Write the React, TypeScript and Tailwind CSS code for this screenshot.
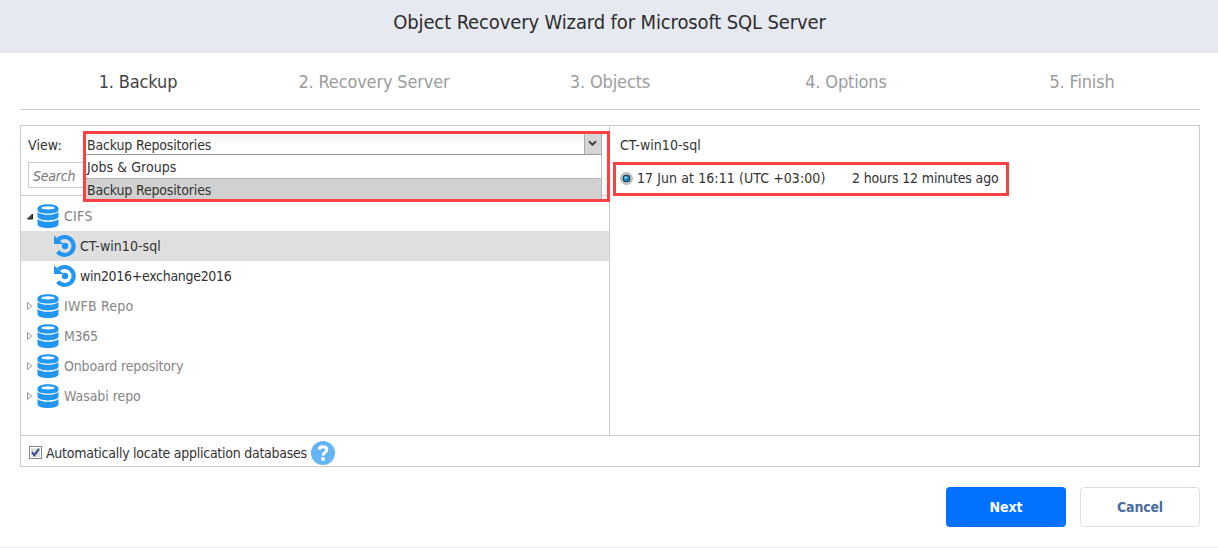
import React from "react";

const steps = ["1. Backup", "2. Recovery Server", "3. Objects", "4. Options", "5. Finish"];

function Database() {
  return (
    <svg className="h-6 w-[22px] shrink-0" viewBox="0 0 22 24" fill="#2196f3">
      <path d="M0.5 4.3C0.5 1.8 5 0.2 11 0.2S21.500 1.800 21.500 4.300V6C21.500 8.300 17 9.600 11 9.600S0.500 8.300 0.500 6Z" />
      <ellipse cx="11" cy="3.900" rx="6.600" ry="1.700" fill="#fff" />
      <path d="M0.500 8C2.500 9.900 6.500 10.800 11 10.800S19.500 9.900 21.500 8V12.600C21.500 15 17 16.400 11 16.400S0.500 15 0.500 12.600Z" />
      <path d="M0.500 15C2.500 16.900 6.500 17.800 11 17.800S19.500 16.900 21.500 15V20.200C21.500 22.500 17 24 11 24S0.500 22.500 0.500 20.200Z" />
    </svg>
  );
}

function Restore() {
  return (
    <svg className="h-6 w-6 shrink-0" viewBox="0 0 24 24">
      <path d="M5.300 5.600A9 9 0 1 1 4.700 17.700" fill="none" stroke="#2196f3" strokeWidth="4.200" />
      <path d="M1 1.500L10.500 10H1Z" fill="#2196f3" />
      <circle cx="12" cy="12" r="3.200" fill="#2196f3" />
    </svg>
  );
}

function Repository({ name, open = false, spacing }: { name: string; open?: boolean; spacing: string }) {
  return (
    <div className="flex h-[30px] items-center pl-[5px] text-[#858585]">
      <svg className="mr-[3px] h-2 w-2 shrink-0" viewBox="0 0 8 8">
        {open ? (
          <path d="M1.500 7L6.500 2V7Z" fill="#444" stroke="#222" />
        ) : (
          <path d="M1.500 0.500V7.500L5.800 4Z" fill="#fff" stroke="#999" />
        )}
      </svg>
      <Database />
      <span className={`ml-[5px] ${spacing}`}>{name}</span>
    </div>
  );
}

function Backup({ name, selected = false, spacing }: { name: string; selected?: boolean; spacing: string }) {
  return (
    <div className={`flex h-[30px] items-center pl-8 ${selected ? "bg-[#dfdfdf]" : ""}`}>
      <Restore />
      <span className={`ml-[3px] ${spacing}`}>{name}</span>
    </div>
  );
}

function RepositoryMenu() {
  return (
    <div className="absolute top-[5px] left-[62px] h-[71px] w-[527px] border-3 border-[#fb4141] bg-white">
      <div className="flex h-[21px] w-[516px] border-b border-[#999] bg-linear-to-b from-[#eff2f2] to-white to-60%">
        <span className="flex-1 pl-px leading-[22px] tracking-[-0.170px]">Backup Repositories</span>
        <span className="flex w-[18px] items-center justify-center border-x border-[#aaa] bg-[#d5d5d5]">
          <svg className="mr-px mb-[2px] h-[7px] w-[9px]" viewBox="0 0 9 7">
            <path d="M1 1.300L4.500 4.800L8 1.300" fill="none" stroke="#444" strokeWidth="2" />
          </svg>
        </span>
      </div>
      <div className="h-[23px] w-[516px] border-r border-[#bbc] pl-px leading-[24px] tracking-[0.050px]">Jobs &amp; Groups</div>
      <div className="flex h-[21px]">
        <div className="w-[516px] border-t border-r border-dotted border-[#999] bg-[#d1d1d1] pl-px leading-[22px] tracking-[-0.170px]">
          Backup Repositories
        </div>
        <div className="h-[18px] flex-1 border-b border-[#ccc]" />
      </div>
    </div>
  );
}

export default function App() {
  return (
    <div className="flex h-[548px] w-[1218px] flex-col overflow-hidden border-b border-[#e4e7ef] bg-white font-['DejaVu_Sans_Condensed','DejaVu_Sans',sans-serif] text-[14px] whitespace-nowrap text-[#333]">
      <header className="flex h-[53px] shrink-0 justify-center bg-[#e6e9f0] pl-px text-[20px] leading-[44px] tracking-[-0.130px] text-[#2d2d2d]">
        Object Recovery Wizard for Microsoft SQL Server
      </header>
      <nav className="mr-[18px] ml-5 grid h-[57px] shrink-0 grid-cols-5 border-b border-[#ccc] text-center text-[18px] leading-[58px] tracking-[-0.150px] text-[#9c9c9c]">
        {steps.map((step, i) => (
          <span key={step} className={i === 0 ? "text-[#444]" : ""}>{step}</span>
        ))}
      </nav>
      <main className="relative mt-[15px] mr-[18px] ml-5 flex h-[342px] w-[1180px] shrink-0 flex-col border border-[#ccc]">
        <div className="flex h-[310px] shrink-0 border-b border-[#ccc]">
          <section className="w-[589px] border-r border-[#ccc]">
            <div className="flex h-[70px] flex-col border-b border-[#ccc] pl-[7px]">
              <span className="h-9 leading-[38px] tracking-[0.100px]">View:</span>
              <span className="h-[26px] w-[160px] border border-[#ccc] pl-1 leading-[26px] tracking-[-0.200px] text-[#777] italic">Search</span>
            </div>
            <div className="pt-[5px]">
              <Repository name="CIFS" open spacing="tracking-[0.300px]" />
              <Backup name="CT-win10-sql" selected spacing="tracking-[0.050px]" />
              <Backup name="win2016+exchange2016" spacing="tracking-[-0.300px]" />
              <Repository name="IWFB Repo" spacing="tracking-[0.200px]" />
              <Repository name="M365" spacing="tracking-[-0.300px]" />
              <Repository name="Onboard repository" spacing="tracking-[-0.150px]" />
              <Repository name="Wasabi repo" spacing="tracking-[-0.060px]" />
            </div>
          </section>
          <section className="flex-1 pl-[3px]">
            <div className="h-9 pl-[7px] leading-[38px] tracking-[0.050px]">CT-win10-sql</div>
            <div className="flex h-[34px] w-[396px] items-center border-3 border-[#fb4141] pb-[2px] pl-[4px]">
              <svg className="h-[13px] w-[13px]" viewBox="0 0 13 13">
                <circle cx="6.500" cy="6.500" r="5.700" fill="#f4f4f4" stroke="#888" strokeWidth="1" />
                <circle cx="6.500" cy="6.500" r="3.500" fill="#1b86bb" stroke="#17324c" strokeWidth="1.200" />
                <circle cx="5.800" cy="5.600" r="1.200" fill="#a6e0f7" />
              </svg>
              <span className="ml-[4px] w-[215px] tracking-[0.080px]">17 Jun at 16:11 (UTC +03:00)</span>
              <span className="tracking-[-0.150px]">2 hours 12 minutes ago</span>
            </div>
          </section>
        </div>
        <div className="flex flex-1 items-center pt-[3px] pl-2">
          <svg className="h-[13px] w-[13px]" viewBox="0 0 13 13">
            <rect x="0.500" y="0.500" width="12" height="12" fill="#fff" stroke="#858585" />
            <rect x="2" y="2" width="9" height="9" fill="#dde1e6" />
            <path d="M3 6L5.300 9.200L10 2.900" fill="none" stroke="#354f91" strokeWidth="2" />
          </svg>
          <span className="ml-1 pt-px tracking-[-0.260px]">Automatically locate application databases</span>
          <svg className="ml-1 h-6 w-6" viewBox="0 0 24 24">
            <circle cx="12" cy="12" r="12" fill="#64b5f6" />
            <path d="M8 8.700C8.400 4.800 15.800 4.800 15.800 8.800C15.800 11.600 12 11.200 12 14.500" fill="none" stroke="#fff" strokeWidth="3" />
            <rect x="10.300" y="16.300" width="3.400" height="3.400" fill="#fff" />
          </svg>
        </div>
        <RepositoryMenu />
      </main>
      <footer className="mr-[18px] flex shrink-0 justify-end gap-[14px] pt-5 font-bold">
        <button className="h-10 w-[120px] rounded bg-[#0072ff] tracking-[-0.050px] text-white">Next</button>
        <button className="h-10 w-[120px] rounded border border-[#d9e1ee] tracking-[-0.200px] text-[#4b6b9b]">Cancel</button>
      </footer>
    </div>
  );
}
